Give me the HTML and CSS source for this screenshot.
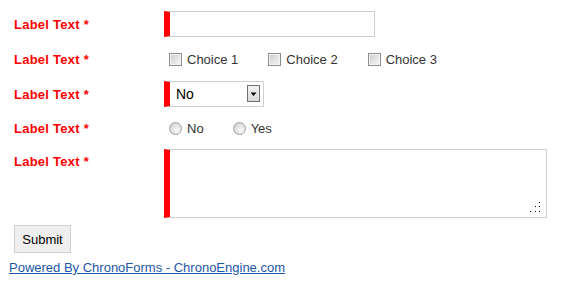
FILE: index.html
```html
<!DOCTYPE html>
<html>
<head>
<meta charset="utf-8">
<link rel="stylesheet" href="styles.css">
</head>
<body>
<div class="page">
  <form class="form">
    <div class="row row-first">
      <label class="label">Label Text *</label>
      <input class="text-input" type="text">
    </div>
    <div class="row row-choices">
      <label class="label">Label Text *</label>
      <div class="options">
        <label class="option"><input class="check" type="checkbox"><span>Choice 1</span></label>
        <label class="option"><input class="check" type="checkbox"><span>Choice 2</span></label>
        <label class="option"><input class="check" type="checkbox"><span>Choice 3</span></label>
      </div>
    </div>
    <div class="row">
      <label class="label">Label Text *</label>
      <span class="select-wrap">
        <select class="select"><option>No</option><option>Yes</option></select>
        <span class="arrow"><svg width="11" height="15" viewBox="0 0 11 15"><path d="M2.5 6.5h6l-3 3.5z" fill="#000"/></svg></span>
      </span>
    </div>
    <div class="row">
      <label class="label">Label Text *</label>
      <div class="options">
        <label class="option option-radio"><input class="radio" type="radio" name="r"><span>No</span></label>
        <label class="option option-radio"><input class="radio" type="radio" name="r"><span>Yes</span></label>
      </div>
    </div>
    <div class="row row-area">
      <label class="label label-top">Label Text *</label>
      <span class="area-wrap">
        <textarea class="area"></textarea>
        <svg class="grip" width="12" height="12" viewBox="0 0 12 12">
          <rect x="10" y="1" width="1" height="1" fill="#000"/>
          <rect x="6" y="5" width="1" height="1" fill="#000"/>
          <rect x="10" y="5" width="1" height="1" fill="#000"/>
          <rect x="1" y="10" width="1" height="1" fill="#000"/>
          <rect x="6" y="10" width="1" height="1" fill="#000"/>
          <rect x="10" y="10" width="1" height="1" fill="#000"/>
        </svg>
      </span>
    </div>
    <div class="submit-row">
      <button class="submit" type="button">Submit</button>
    </div>
  </form>
  <div class="powered"><a class="powered-link" href="#">Powered By ChronoForms - ChronoEngine.com</a></div>
</div>
</body>
</html>
```
FILE: styles.css
```css
html, body {
  margin: 0;
  padding: 0;
  background: #fff;
}
body {
  font-family: "Liberation Sans", Arial, sans-serif;
  font-size: 13px;
  color: #333;
}
.page {
  padding: 11px 8px 0 8px;
}
.form {
  margin: 0;
  padding-left: 6px;
}
.row {
  display: flex;
  align-items: center;
  height: 26px;
  margin-top: 8px;
}
.row-first {
  margin-top: 0;
}
.row-choices {
  margin-top: 9px;
}
.row-choices + .row {
  margin-top: 9px;
}
.row-area {
  align-items: flex-start;
  height: auto;
}
.label {
  width: 150px;
  flex: none;
  color: #f00;
  font-weight: bold;
  font-size: 13px;
  line-height: 15px;
  letter-spacing: 0.25px;
}
.label-top {
  padding-top: 5px;
}
.text-input {
  box-sizing: border-box;
  width: 211px;
  height: 26px;
  margin: 0;
  border: 1px solid #cfcfcf;
  border-left: 6px solid #f00;
  padding: 0 6px;
  font: 13px "Liberation Sans", Arial, sans-serif;
  outline: none;
  background: #fff;
}
.options {
  display: flex;
  align-items: center;
  padding-left: 5px;
}
.option {
  display: flex;
  align-items: center;
  margin-right: 30px;
  color: #333;
  line-height: 15px;
}
.option-radio {
  margin-right: 29px;
}
.check {
  appearance: none;
  -webkit-appearance: none;
  box-sizing: border-box;
  width: 13px;
  height: 13px;
  margin: 0 5px 0 0;
  border: 1px solid #8e8e8e;
  background: linear-gradient(135deg, #cdcdcd, #f8f8f8);
  box-shadow: inset 0 0 0 1px #f3f3f3;
}
.radio {
  appearance: none;
  -webkit-appearance: none;
  box-sizing: border-box;
  width: 13px;
  height: 13px;
  margin: 0 5px 0 0;
  border: 1px solid #a0a0a0;
  border-radius: 50%;
  background: radial-gradient(circle at 65% 65%, #fafafa 0, #e4e4e4 45%, #c9c9c9 100%);
}
.select-wrap {
  position: relative;
  display: inline-block;
  width: 100px;
  height: 26px;
}
.select {
  appearance: none;
  -webkit-appearance: none;
  box-sizing: border-box;
  width: 100px;
  height: 26px;
  margin: 0;
  border: 1px solid #cfcfcf;
  border-left: 6px solid #f00;
  border-radius: 0;
  padding: 0 0 0 6px;
  background: #fff;
  color: #000;
  font: 14px "Liberation Sans", Arial, sans-serif;
  outline: none;
}
.arrow {
  position: absolute;
  right: 4px;
  top: 4px;
  box-sizing: border-box;
  width: 13px;
  height: 17px;
  border: 1px solid #6f6f6f;
  background: linear-gradient(#f4f4f4, #d9d9d9);
  pointer-events: none;
  display: block;
}
.arrow svg {
  display: block;
}
.area-wrap {
  position: relative;
  display: block;
  width: 383px;
  height: 69px;
}
.area {
  box-sizing: border-box;
  display: block;
  width: 383px;
  height: 69px;
  margin: 0;
  border: 1px solid #cfcfcf;
  border-left: 6px solid #f00;
  padding: 4px 6px;
  resize: none;
  outline: none;
  font: 13px "Liberation Sans", Arial, sans-serif;
  background: #fff;
}
.grip {
  position: absolute;
  right: 6px;
  bottom: 5px;
  pointer-events: none;
}
.submit-row {
  margin-top: 7px;
}
.submit {
  box-sizing: border-box;
  height: 28px;
  width: 57px;
  margin: 0;
  padding: 0;
  border: 1px solid #d0d0d0;
  border-radius: 0;
  background: #efefef;
  color: #000;
  font: 13px "Liberation Sans", Arial, sans-serif;
}
.powered {
  margin-top: 7px;
  padding-left: 1px;
  line-height: 16px;
}
.powered-link {
  color: #1c56a6;
  text-decoration: underline;
  font-size: 13px;
}
```
